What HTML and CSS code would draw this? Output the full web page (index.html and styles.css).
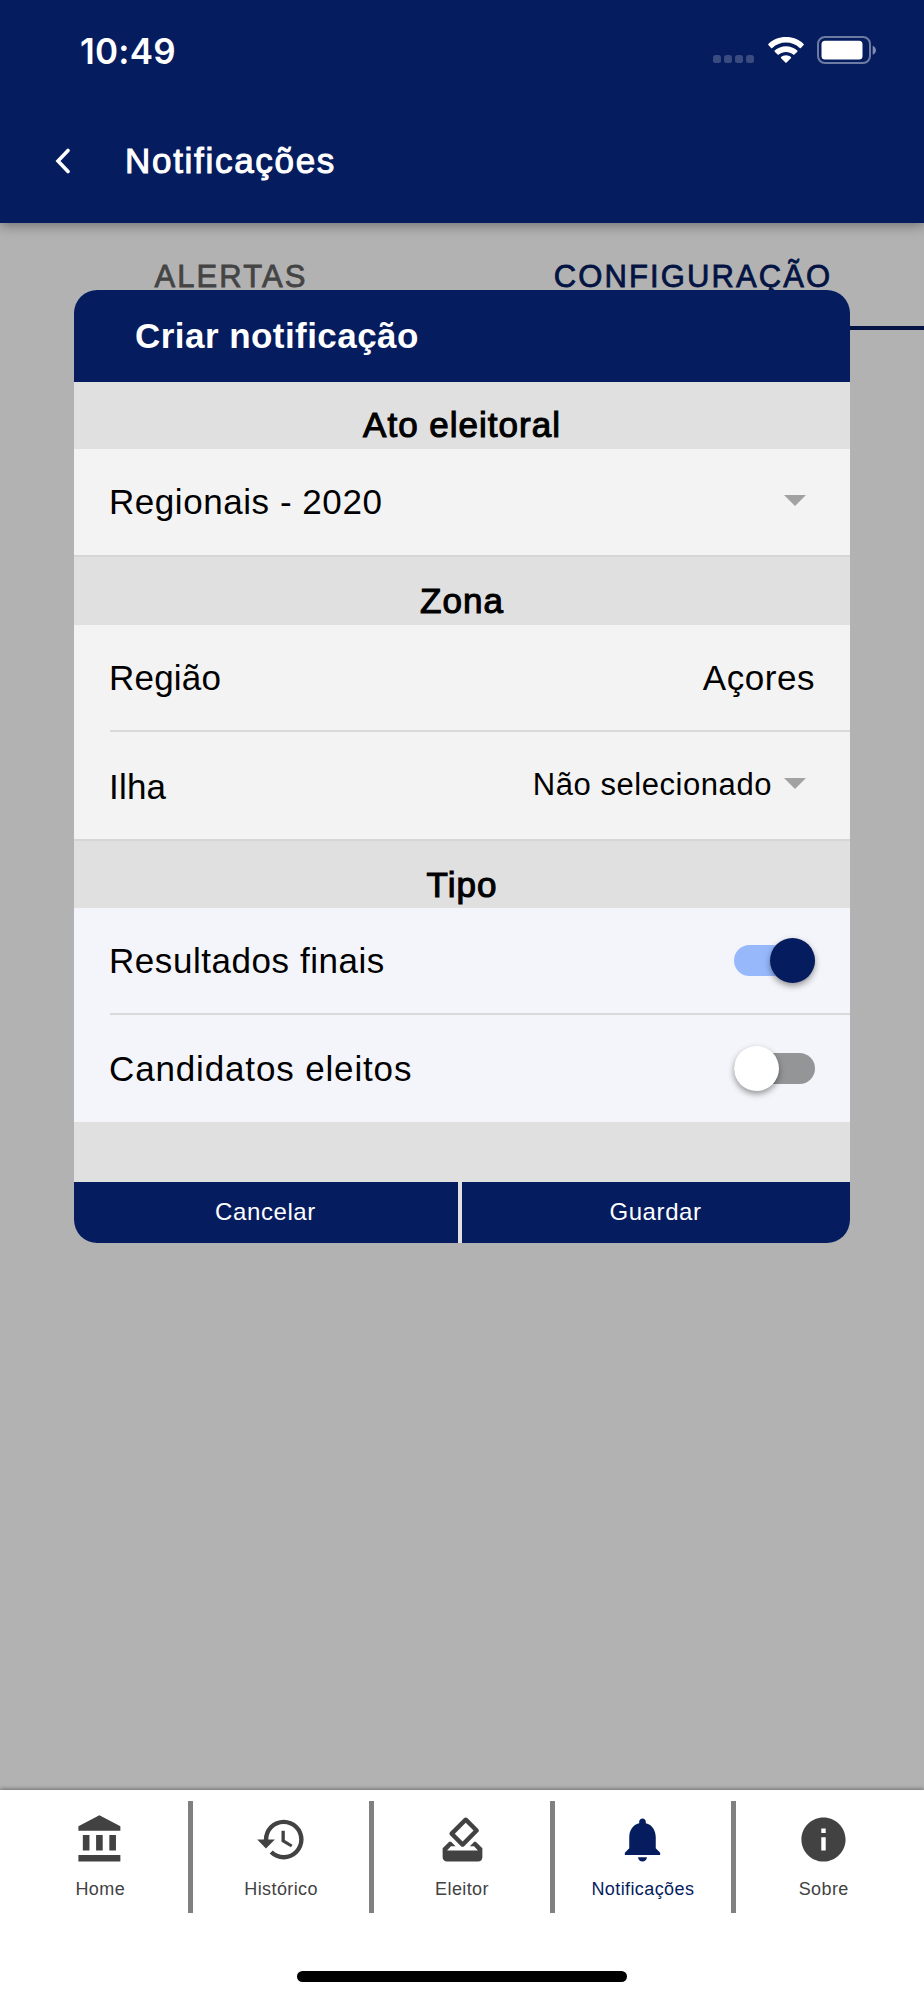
FILE: index.html
```html
<!DOCTYPE html>
<html lang="pt">
<head>
    <meta charset="UTF-8">
    <meta name="viewport" content="width=device-width, initial-scale=1.0">
    <title>Notificações</title>
    <link rel="stylesheet" href="styles.css">
</head>
<body>

    <header class="header">
        <div class="status-bar">
            <span class="time">10:49</span>
            <div class="status-icons">
                <div class="signal"><i></i><i></i><i></i><i></i></div>
                <svg class="wifi" viewBox="0 0 36 27">
                    <path d="M18 0C11 0 4.8 2.6.4 6.9c-.4.4-.4.8 0 1.2l2.7 2.8c.4.4.8.4 1.2 0C8 7.5 12.8 5.5 18 5.5s10 2 13.7 5.4c.4.4.8.4 1.2 0l2.7-2.8c.4-.4.4-.8 0-1.2C31.2 2.6 25 0 18 0z"/>
                    <path d="M18 9.2c-4.3 0-8.3 1.6-11.3 4.3-.4.4-.4.8 0 1.2l2.9 2.9c.4.4.8.4 1.2 0 2-1.7 4.5-2.7 7.2-2.7s5.2 1 7.2 2.7c.4.4.8.4 1.2 0l2.9-2.9c.4-.4.4-.8 0-1.2-3-2.7-7-4.3-11.3-4.3z"/>
                    <path d="M18 18.2c-1.9 0-3.6.7-4.9 1.8-.4.4-.4.8 0 1.2l4.3 4.4c.4.4.8.4 1.2 0l4.3-4.4c.4-.4.4-.8 0-1.2-1.3-1.1-3-1.8-4.9-1.8z"/>
                </svg>
                <svg class="battery" viewBox="0 0 60 28">
                    <rect x="1" y="1" width="52" height="26" rx="7" fill="none" stroke="#fff" stroke-opacity=".42" stroke-width="2"/>
                    <rect x="4.5" y="4.8" width="41" height="18.8" rx="3.5"/>
                    <path d="M55.7 9.7c1.9.8 3.2 2.5 3.2 4.5s-1.3 3.7-3.2 4.5z" opacity=".5"/>
                </svg>
            </div>
        </div>
        <div class="toolbar">
            <svg class="back" viewBox="0 0 16 26">
                <path d="M13 2.5 3 13l10 10.5"/>
            </svg>
            <h1>Notificações</h1>
        </div>
    </header>

    <main class="content">
        <div class="tabs">
            <div class="tab">ALERTAS</div>
            <div class="tab active">CONFIGURAÇÃO</div>
        </div>

        <div class="modal">
            <h2 class="modal-title">Criar notificação</h2>

            <h3 class="section first">Ato eleitoral</h3>
            <div class="row full">
                <span>Regionais - 2020</span>
                <span class="caret"></span>
            </div>

            <h3 class="section">Zona</h3>
            <div class="row line">
                <span class="narrow">Região</span>
                <span>Açores</span>
            </div>
            <div class="row full ilha">
                <span class="narrow">Ilha</span>
                <span class="select">Não selecionado <span class="caret"></span></span>
            </div>

            <h3 class="section tipo">Tipo</h3>
            <div class="row line light">
                <span>Resultados finais</span>
                <span class="toggle on"></span>
            </div>
            <div class="row light last">
                <span>Candidatos eleitos</span>
                <span class="toggle"></span>
            </div>

            <div class="buttons">
                <button class="cancel">Cancelar</button>
                <button class="save">Guardar</button>
            </div>
        </div>
    </main>

    <footer class="footer">
        <nav class="nav">
            <div class="nav-item">
                <svg viewBox="0 0 24 24"><path d="M11.5 1 2 6v2h19V6l-9.5-5zM16 10v7h3v-7h-3zM2 22h19v-3H2v3zm8-12v7h3v-7h-3zm-6 0v7h3v-7H4z"/></svg>
                <span>Home</span>
            </div>
            <div class="divider"></div>
            <div class="nav-item">
                <svg viewBox="0 0 24 24"><path d="M13.5 8H12v5l4.28 2.54.72-1.21-3.5-2.08V8zM13 3a9 9 0 0 0-9 9H1l3.96 4.03L9 12H6a7 7 0 0 1 7-7 7 7 0 0 1 7 7 7 7 0 0 1-7 7c-1.93 0-3.68-.79-4.94-2.06l-1.42 1.42C8.27 20 10.5 21 13 21a9 9 0 0 0 9-9 9 9 0 0 0-9-9z"/></svg>
                <span>Histórico</span>
            </div>
            <div class="divider"></div>
            <div class="nav-item">
                <svg viewBox="0 0 24 24"><path d="M18 13h-.68l-2 2h1.91L19 17H5l1.78-2h2.05l-2-2H6l-3 3v4c0 1.1.89 2 1.99 2H19c1.1 0 2-.89 2-2v-4l-3-3zm-1-5.05l-4.95 4.95-3.54-3.54 4.95-4.95L17 7.95zm-4.24-5.66L6.39 8.66c-.39.39-.39 1.02 0 1.41l4.95 4.95c.39.39 1.02.39 1.41 0l6.36-6.36c.39-.39.39-1.02 0-1.41L14.16 2.3c-.38-.4-1.01-.4-1.4-.01z"/></svg>
                <span>Eleitor</span>
            </div>
            <div class="divider"></div>
            <div class="nav-item active">
                <svg viewBox="0 0 24 24"><path d="M12 22c1.1 0 2-.9 2-2h-4c0 1.1.89 2 2 2zm6-6v-5c0-3.07-1.64-5.64-4.5-6.32V4c0-.83-.67-1.5-1.5-1.5s-1.5.67-1.5 1.5v.68C7.63 5.36 6 7.92 6 11v5l-2 2v1h16v-1l-2-2z"/></svg>
                <span>Notificações</span>
            </div>
            <div class="divider"></div>
            <div class="nav-item">
                <svg viewBox="0 0 24 24"><path d="M12 2C6.48 2 2 6.48 2 12s4.48 10 10 10 10-4.48 10-10S17.52 2 12 2zm1 15h-2v-6h2v6zm0-8h-2V7h2v2z"/></svg>
                <span>Sobre</span>
            </div>
        </nav>
        <div class="home-bar"></div>
    </footer>

</body>
</html>
```
FILE: styles.css
```css
* {
    box-sizing: border-box;
}

body {
    margin: 0;
    height: 2000px;
    display: flex;
    flex-direction: column;
    font-family: 'Liberation Sans', Arial, sans-serif;
    font-size: 35px;
    font-variant-ligatures: none;
    letter-spacing: 0.55px;
    line-height: 40px;
    color: #000;
    background: #b2b2b2;
    overflow: hidden;
}

h1, h2, h3 {
    margin: 0;
    font-size: 35px;
}

/* Header */
.header {
    height: 223px;
    flex: none;
    background: #051c5f;
    color: #fff;
    box-shadow: 0 2px 12px rgba(0, 0, 0, 0.4);
}

.status-bar {
    height: 100px;
    padding: 0 47px 0 80px;
    display: flex;
    justify-content: space-between;
    align-items: center;
    fill: #fff;
}

.time {
    padding-top: 2px;
    font-family: Inter, sans-serif;
    font-weight: 600;
    font-size: 35px;
    letter-spacing: 0.2px;
}

.status-icons {
    display: flex;
    align-items: center;
}

.signal {
    display: flex;
    gap: 3px;
    margin: 18px 14px 0 0;
}

.signal i {
    width: 8px;
    height: 8px;
    border-radius: 2.5px;
    background: #3a4b80;
}

.wifi {
    width: 36px;
    height: 27px;
    margin-right: 13px;
}

.battery {
    width: 60px;
    height: 28px;
}

.toolbar {
    height: 123px;
    padding: 0 0 2px 55px;
    display: flex;
    align-items: center;
}

.back {
    width: 16px;
    height: 26px;
    margin-right: 54px;
    fill: none;
    stroke: #fff;
    stroke-width: 3.6;
    stroke-linecap: round;
}

.toolbar h1 {
    font-weight: normal;
    letter-spacing: 1.7px;
    -webkit-text-stroke: 1px #fff;
}

/* Tabs */
.content {
    flex: 1;
}

.tabs {
    height: 107px;
    display: flex;
}

.tab {
    flex: 1;
    padding-top: 1px;
    display: flex;
    justify-content: center;
    align-items: center;
    font-size: 31px;
    letter-spacing: 2.1px;
    color: #444;
    -webkit-text-stroke: 0.8px #444;
}

.tab.active {
    padding-top: 5px;
    border-bottom: 4px solid #031343;
    color: #031343;
    -webkit-text-stroke: 0.8px #031343;
}

/* Modal */
.modal {
    position: absolute;
    top: 290px;
    left: 74px;
    width: 776px;
    height: 953px;
    border-radius: 23px;
    overflow: hidden;
    display: flex;
    flex-direction: column;
    background: #e0e0e0;
}

.modal-title {
    height: 92px;
    padding-left: 61px;
    line-height: 92px;
    letter-spacing: 0.45px;
    background: #051c5f;
    color: #fff;
}

.section {
    height: 68px;
    padding-top: 24px;
    text-align: center;
    font-weight: normal;
    letter-spacing: 1px;
    -webkit-text-stroke: 1.1px #000;
}

.section.first {
    height: 67px;
    padding-top: 23px;
}

.section.tipo {
    height: 67px;
    padding-top: 24px;
}

.row {
    height: 107px;
    padding: 0 35px;
    display: flex;
    justify-content: space-between;
    align-items: center;
    background: #f3f3f3;
}

.row.full {
    height: 108px;
    border-bottom: 2px solid #d6d6d6;
}

.row.ilha {
    height: 109px;
    padding-top: 2px;
}

.row.light {
    background: #f4f5fa;
}

.row.last {
    letter-spacing: 0.85px;
}

.narrow {
    letter-spacing: 0.2px;
}

/* divider starts at the label */
.row.line {
    background-image: linear-gradient(#d8d9da, #d8d9da);
    background-size: 740px 2px;
    background-position: right bottom;
    background-repeat: no-repeat;
    padding-bottom: 2px;
}

.caret {
    width: 0;
    height: 0;
    margin: -4px 9px 0 0;
    border-left: 11px solid transparent;
    border-right: 11px solid transparent;
    border-top: 11px solid #a2a2a2;
}

.select {
    display: flex;
    align-items: center;
    gap: 12px;
    margin-top: -3px;
    font-size: 31px;
}

.toggle {
    width: 81px;
    height: 31px;
    display: flex;
    align-items: center;
    border-radius: 16px;
    background: #949597;
}

.toggle::before {
    content: "";
    width: 45px;
    height: 45px;
    border-radius: 50%;
    background: #fff;
    box-shadow: 0 3px 6px rgba(0, 0, 0, 0.4);
    flex: none;
}

.toggle.on {
    justify-content: flex-end;
    background: #97b9fc;
}

.toggle.on::before {
    background: #051c5f;
}

.buttons {
    margin-top: auto;
    height: 61px;
    display: flex;
    gap: 4px;
}

.buttons button {
    border: none;
    padding: 0 1px 1px 0;
    font-family: inherit;
    font-size: 24px;
    letter-spacing: 0.6px;
    background: #051c5f;
    color: #fff;
}

.cancel {
    width: 384px;
}

.save {
    flex: 1;
}

/* Bottom navigation */
.footer {
    height: 210px;
    flex: none;
    display: flex;
    flex-direction: column;
    align-items: center;
    justify-content: space-between;
    padding: 11px 0 18px;
    background: #fff;
    box-shadow: 0 -1px 4px rgba(0, 0, 0, 0.4);
}

.nav {
    height: 112px;
    display: flex;
}

.nav-item {
    width: 176.2px;
    padding-top: 12px;
    display: flex;
    flex-direction: column;
    align-items: center;
    font-size: 18px;
    letter-spacing: 0.4px;
    line-height: 22px;
    color: #424242;
    fill: #424242;
}

.nav-item svg {
    width: 53px;
    height: 53px;
    margin-bottom: 12px;
}

.nav-item.active {
    color: #051c5f;
    fill: #051c5f;
}

.divider {
    width: 4.7px;
    background: #808080;
}

.home-bar {
    width: 330px;
    height: 11px;
    border-radius: 6px;
    background: #000;
}
```
